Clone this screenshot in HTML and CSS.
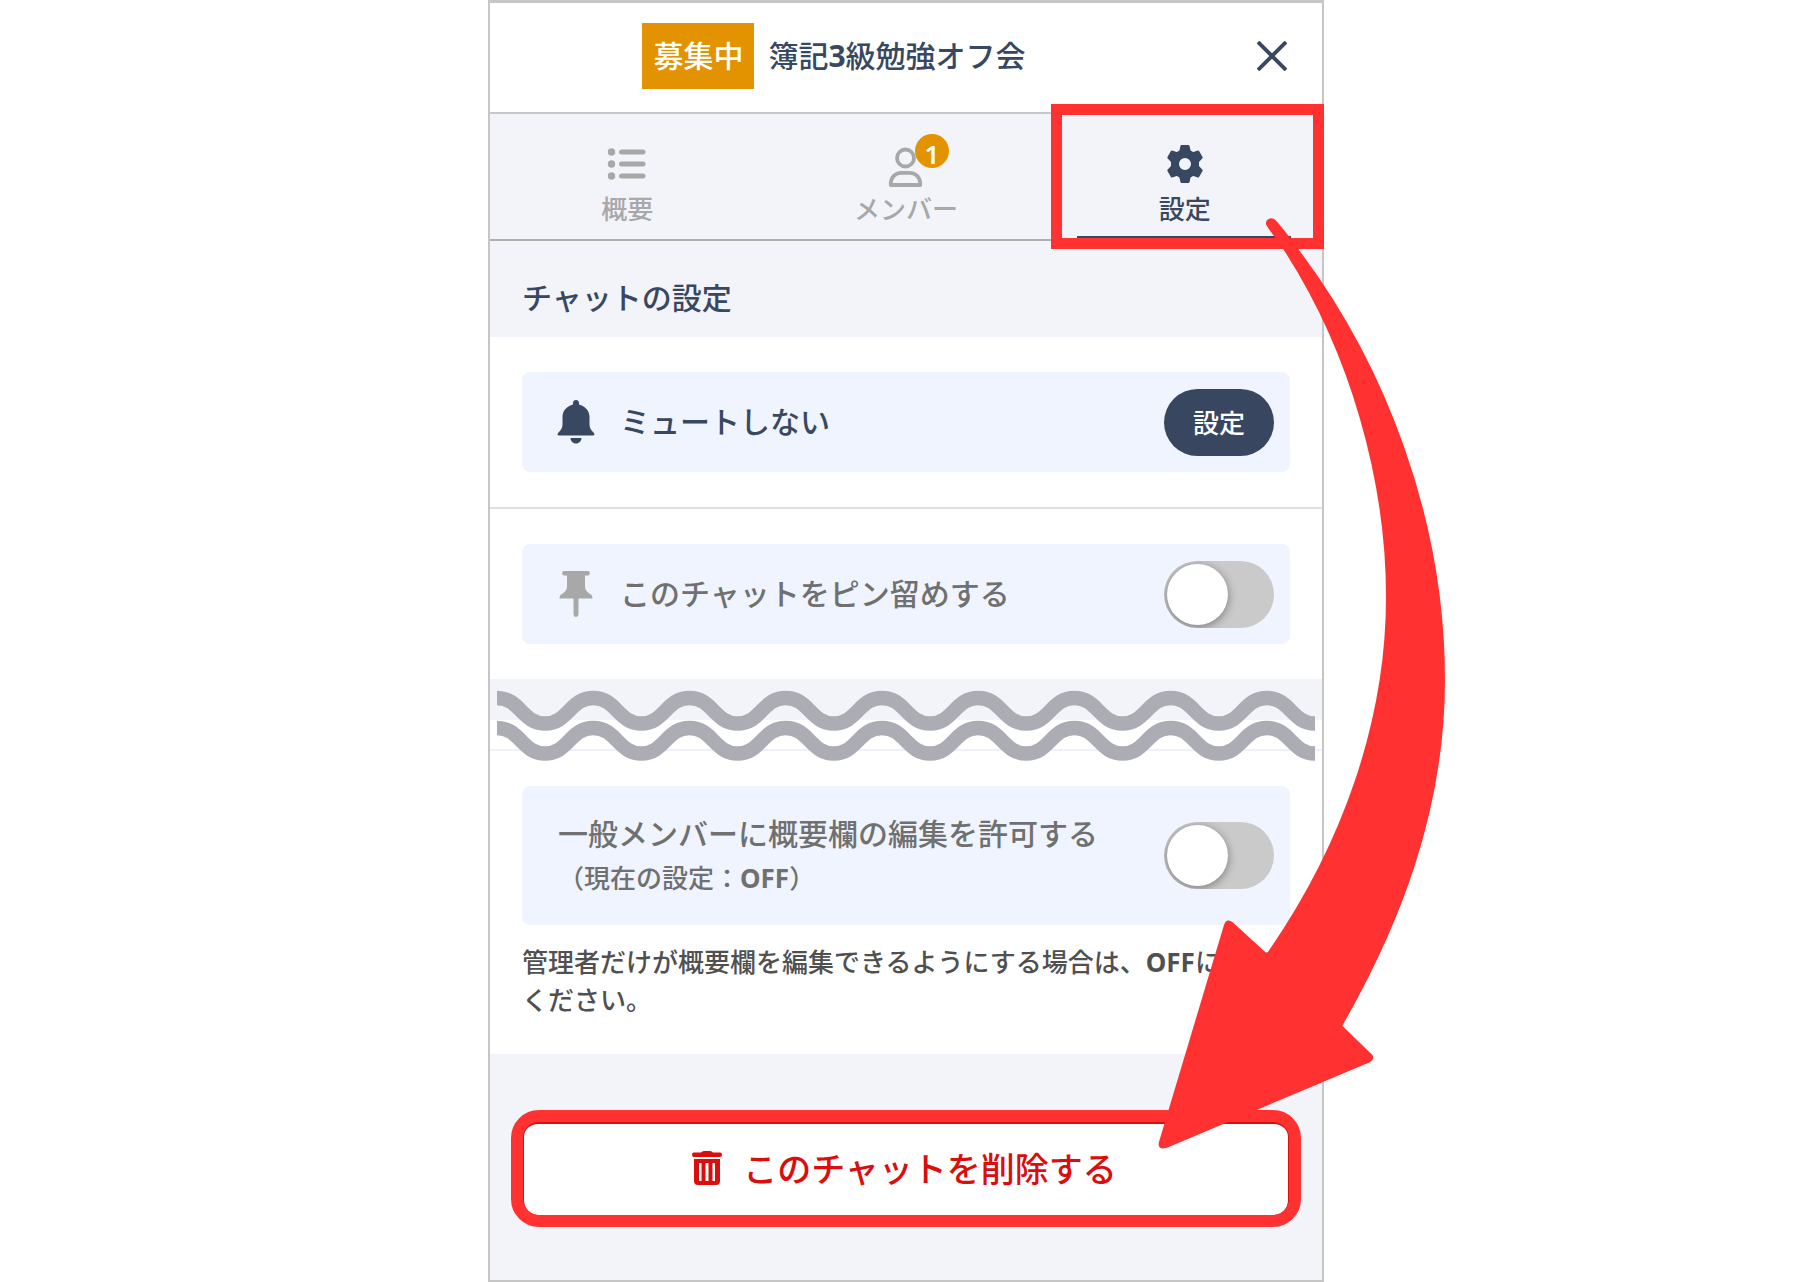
FILE: index.html
```html
<!DOCTYPE html>
<html lang="ja">
<head>
<meta charset="utf-8">
<meta name="viewport" content="width=device-width, initial-scale=1">
<title>簿記3級勉強オフ会</title>
<link rel="stylesheet" href="styles.css">
</head>
<body>
<main class="panel">
  <header class="header">
    <div class="heading">
      <span class="status">募集中</span>
      <h1 class="title">簿記<b>3</b>級勉強オフ会</h1>
    </div>
    <button class="close" type="button" aria-label="閉じる">
      <svg width="30" height="30" viewBox="0 0 30 30" fill="none" stroke="currentColor" stroke-width="3.8"><path d="M1 1 29 29M29 1 1 29"/></svg>
    </button>
  </header>

  <nav class="tabs">
    <a class="tab" href="#overview">
      <svg width="40" height="40" viewBox="0 0 40 40" fill="none" stroke="currentColor" stroke-linecap="round"><path stroke-width="5" d="M14.500 8H36M14.500 20H36M14.500 32H36"/><path stroke-width="7.400" d="M4.500 8h.01M4.500 20h.01M4.500 32h.01"/></svg>
      <span>概要</span>
    </a>
    <a class="tab" href="#members">
      <svg width="40" height="44" viewBox="0 0 40 44" fill="none" stroke="currentColor" stroke-width="3.800" stroke-linejoin="round"><circle cx="19.500" cy="14" r="8.500"/><path d="M4.800 41V39C5.300 33 9.500 28.800 15.500 28.800H23.500C29.500 28.800 33.700 33 34.200 39V41Z"/></svg>
      <span>メンバー</span>
      <span class="count">1</span>
    </a>
    <a class="tab tab-active" href="#settings" aria-current="page">
      <svg width="40" height="40" viewBox="0 0 40 40"><path fill="currentColor" stroke="currentColor" stroke-width="2" stroke-linejoin="round" fill-rule="evenodd" d="M16.500 2H23.500L24.700 7.200 28 9.100 33.200 7.500 36.700 13.500 33 17.700V22.300L36.700 26.500 33.200 32.500 28 30.900 24.700 32.800 23.500 38H16.500L15.300 32.800 12 30.900 6.800 32.500 3.300 26.500 7 22.300V17.700L3.300 13.500 6.800 7.500 12 9.100 15.300 7.200ZM20 13A7 7 0 1 0 20 27 7 7 0 1 0 20 13Z"/></svg>
      <span>設定</span>
      <span class="tab-mark"></span>
    </a>
  </nav>

  <h2 class="section-title">チャットの設定</h2>

  <section class="row">
    <div class="card">
      <svg class="card-icon navy" width="44" height="48" viewBox="0 0 44 48" fill="currentColor"><path d="M22 2C23.800 2 25 3.200 25 5V6.500C31 8 35.500 12.500 35.500 19V26C35.500 30 37 32 39.500 34.500 41.200 36.300 40.500 37.500 38.500 37.500H5.500C3.500 37.500 2.800 36.300 4.500 34.500 7 32 8.500 30 8.500 26V19C8.500 12.500 13 8 19 6.500V5C19 3.200 20.200 2 22 2ZM16.500 40H27.500C27.500 43 25 45.500 22 45.500S16.500 43 16.500 40Z"/></svg>
      <span class="card-label navy">ミュートしない</span>
      <button class="pill" type="button">設定</button>
    </div>
  </section>

  <section class="row">
    <div class="card">
      <svg class="card-icon pin" width="44" height="48" viewBox="0 0 44 48" fill="currentColor"><path d="M10 1H34C36.500 1 36.500 5 34 5.500H31V16C31 20 33 22 36 24 38 25 38.500 26.500 38.500 28.500H24.500V44C24.500 48 19.500 48 19.500 44V28.500H5.500C5.500 26.500 6 25 8 24 11 22 13 20 13 16V5.500H10C7.500 5 7.500 1 10 1Z"/></svg>
      <label class="card-label" for="pin">このチャットをピン留めする</label>
      <input class="switch" id="pin" type="checkbox" role="switch">
    </div>
  </section>

  <div class="break">
    <svg class="waves" viewBox="0 0 816 68" preserveAspectRatio="none" fill="none" stroke="#acacb5" stroke-width="14.500">
      <defs><path id="wave" d="M0 0c23 0 25 25.500 48 25.500s25-25.500 48-25.500 25 25.500 48 25.500 25-25.500 48-25.500 25 25.500 48 25.500 25-25.500 48-25.500 25 25.500 48 25.500 25-25.500 48-25.500 25 25.500 48 25.500 25-25.500 48-25.500 25 25.500 48 25.500 25-25.500 48-25.500 25 25.500 48 25.500 25-25.500 48-25.500 25 25.500 48 25.500 25-25.500 48-25.500 25 25.500 48 25.500"/></defs>
      <use href="#wave" y="8"/>
      <use href="#wave" y="38"/>
    </svg>
  </div>

  <section class="row">
    <div class="card card-tall">
      <label class="card-label" for="edit">一般メンバーに概要欄の編集を許可する<small class="card-state">（現在の設定：<b>OFF</b>）</small></label>
      <input class="switch" id="edit" type="checkbox" role="switch">
    </div>
    <p class="note">管理者だけが概要欄を編集できるようにする場合は、<b>OFF</b>にして<br>ください。</p>
  </section>

  <footer class="footer">
    <button class="delete" type="button">
      <svg width="32" height="36" viewBox="0 0 32 36"><path fill="currentColor" fill-rule="evenodd" d="M10 2.500Q11 1 13 1H19Q21 1 22 2.500H29Q31 2.500 31 4.700T29 7H3Q1 7 1 4.700T3 2.500ZM3 9H29V31Q29 35 25 35H7Q3 35 3 31ZM8 13V31H10.500V13ZM14.500 13V31H17.500V13ZM21.500 13V31H24V13Z"/></svg>
      <span>このチャットを削除する</span>
      <span class="delete-mark"></span>
    </button>
  </footer>

  <svg class="arrow" width="300" height="944" viewBox="1152 212 300 944" aria-hidden="true"><path fill="#ff3131" stroke="#ff3131" stroke-width="2" stroke-linejoin="round" d="M1268 226C1264 220 1272 217 1276 222Q1287 235 1297 249C1385 365 1444 520 1444 680 1444 810 1399 925 1341 1026L1371 1055Q1374 1058 1370 1061L1166 1147Q1158 1149 1160 1142L1225 925Q1227 919 1232 923L1267 955C1344 845 1387 720 1387 597 1387 480 1351 352 1285 250Z"/></svg>
</main>
</body>
</html>
```
FILE: styles.css
```css
* { box-sizing: border-box; }

body {
  margin: 0;
  background: #fff;
  color: #707070;
  font-family: "Noto Sans", "Noto Sans CJK JP", sans-serif;
  font-size: 30px;
  font-weight: 500;
}

b { font-weight: 700; }

button {
  padding: 0;
  border: 0;
  background: none;
  font: inherit;
  cursor: pointer;
}

svg { display: block; flex: none; }

.navy { color: #384860; }

.panel {
  position: relative;
  max-width: 836px;
  min-height: 100vh;
  margin: 0 auto;
  display: flex;
  flex-direction: column;
  border: 2px solid #c6c6c6;
  border-top-width: 3px;
  background: #f3f4f9;
}

/* Header */
.header {
  display: flex;
  align-items: center;
  height: 111px;
  padding: 0 28px 3px 0;
  border-bottom: 2px solid #c8c8c8;
  background: #fff;
  color: #384860;
}

.heading {
  flex: 1;
  display: flex;
  align-items: center;
  justify-content: center;
  gap: 14px;
}

.status {
  width: 112px;
  background: #e39300;
  color: #fff;
  line-height: 66px;
  text-align: center;
}

.title {
  margin: 0;
  font-size: 30px;
  font-weight: 500;
  line-height: 40px;
}

.close {
  display: grid;
  place-items: center;
  width: 44px;
  height: 44px;
  margin-left: 72px;
  color: inherit;
}

/* Tabs */
.tabs {
  display: grid;
  grid-template-columns: repeat(3, 1fr);
  column-gap: 4px;
  border-bottom: 2px solid #b0b0b0;
}

.tab {
  position: relative;
  display: flex;
  flex-direction: column;
  align-items: center;
  justify-content: space-between;
  height: 125px;
  padding: 30px 0 12px;
  color: #a8a8a8;
  font-size: 26px;
  line-height: 36px;
  text-decoration: none;
}

.tab-active { color: #384860; }

.tab-active::after {
  content: "";
  position: absolute;
  right: 31px;
  bottom: 0;
  left: 30px;
  height: 3px;
  background: #384860;
}

.count {
  position: absolute;
  top: 20px;
  left: calc(50% + 9px);
  width: 34px;
  height: 34px;
  border-radius: 50%;
  background: #e39300;
  color: #fff;
  font-weight: 600;
  line-height: 40px;
  text-align: center;
}

.tab-mark {
  position: absolute;
  z-index: 1;
  inset: -10px -2px -10px 4px;
  border: 11px solid #ff3131;
}

/* Settings */
.section-title {
  margin: 0;
  padding: 37px 32px 19px;
  color: #384860;
  font-size: 30px;
  font-weight: 500;
  line-height: 40px;
}

.row {
  padding: 35px 32px;
  background: #fff;
}

.row + .row { border-top: 2px solid #e0e0e0; }

.card {
  display: flex;
  align-items: center;
  min-height: 100px;
  padding: 0 16px 0 32px;
  border-radius: 8px;
  background: #eff4ff;
}

.card-tall {
  min-height: 139px;
  padding-left: 36px;
}

.card-icon { margin-right: 22px; }

.pin { color: #a8a8a8; }

.card-label {
  flex: 1;
  line-height: 44px;
}

.card-state {
  display: block;
  font-size: 26px;
}

.pill {
  width: 110px;
  height: 67px;
  border-radius: 34px;
  background: #38475f;
  color: #fff;
  font-size: 26px;
}

.switch {
  appearance: none;
  flex: none;
  width: 110px;
  height: 67px;
  margin: 0;
  padding: 3px;
  overflow: hidden;
  border-radius: 34px;
  background: #cacaca;
  cursor: pointer;
}

.switch::before {
  content: "";
  display: block;
  width: 61px;
  height: 61px;
  border-radius: 50%;
  background: #fff;
  box-shadow: 0 2px 10px rgba(0, 0, 0, 0.4);
}

.switch:checked::before { margin-left: auto; }

.note {
  margin: 18px 0 0;
  color: #505050;
  font-size: 26px;
  line-height: 38px;
}

/* Omitted part of the list */
.break {
  height: 72px;
  padding: 11px 7px 0;
  background: linear-gradient(#f3f4f9 41px, #fff 41px, #fff 70px, #f0f1f8 70px);
}

/* Positioned so that the lower wave paints over the next row */
.waves {
  position: relative;
  width: 100%;
  height: 68px;
  overflow: visible;
}

/* Delete */
.footer {
  flex: 1;
  padding: 67px 32px 60px;
}

.delete {
  position: relative;
  display: flex;
  align-items: center;
  justify-content: center;
  gap: 20px;
  width: 100%;
  height: 95px;
  padding: 0 4px 4px 0;
  border: solid #dc0d0d;
  border-width: 3px 2px 1px;
  border-radius: 16px;
  background: #fff;
  color: #dc0d0d;
  font-size: 34px;
}

.delete-mark {
  position: absolute;
  inset: -14px -13px -12px;
  border: 12px solid #ff3131;
  border-radius: 28px;
}

.arrow {
  position: absolute;
  z-index: 2;
  top: 209px;
  right: -130px;
}
```
